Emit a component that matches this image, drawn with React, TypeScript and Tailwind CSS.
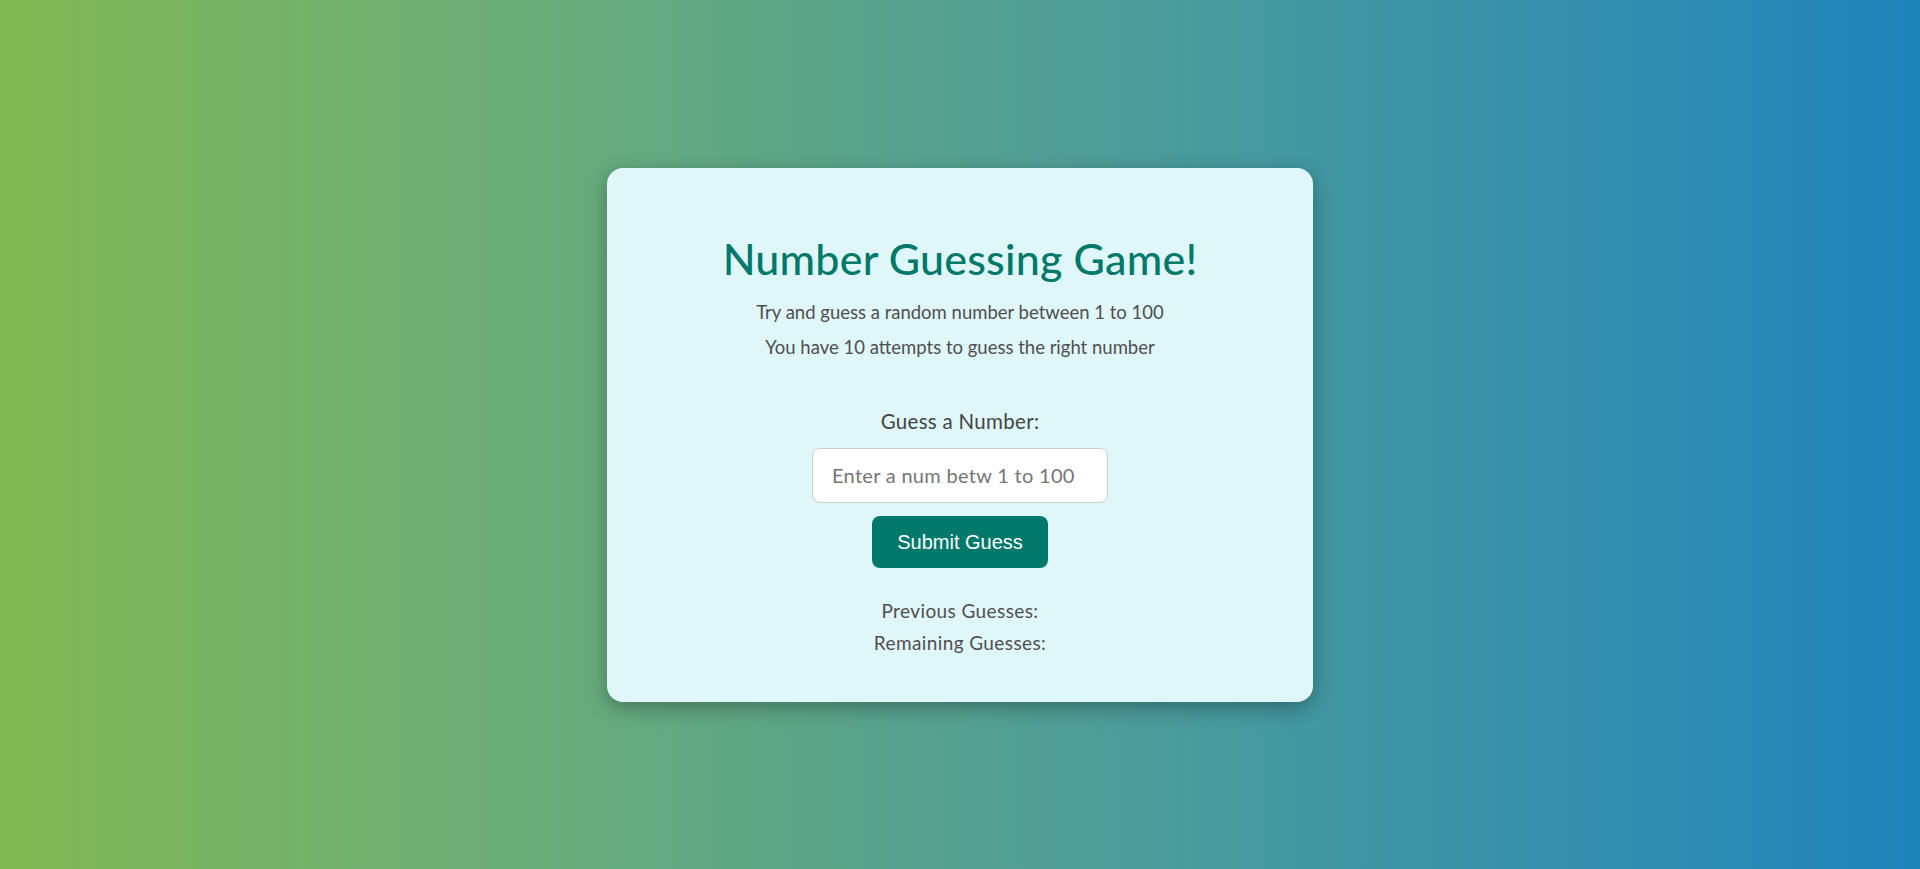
import React from "react";

export default function App() {
  return (
    <div className="min-h-screen w-full flex items-center justify-center bg-gradient-to-r from-[#83b951] to-[#1f84bb] font-['Lato',sans-serif]">
      <div className="w-[706px] bg-[#e0f7fa] rounded-[16px] shadow-[0_6px_20px_rgba(0,0,0,0.3)] pt-[67px] pb-[43px] flex flex-col items-center">
        <h1 className="text-[43px] leading-[48px] text-[#00796b] font-medium tracking-[0.2px]">Number Guessing Game!</h1>
        <p className="mt-[12px] text-[18.5px] leading-[35px] text-[#4f4f4f]">Try and guess a random number between 1 to 100</p>
        <p className="text-[18.5px] leading-[35px] text-[#4f4f4f]">You have 10 attempts to guess the right number</p>
        <label className="mt-[42px] text-[20.5px] leading-[28px] text-[#444] tracking-[0.3px]">Guess a Number:</label>
        <input
          type="text"
          placeholder="Enter a num betw 1 to 100"
          className="mt-[13px] w-[296px] h-[55px] rounded-[8px] border border-[#cccccc] bg-white px-[19px] text-[20px] tracking-[0.3px] font-['Lato',sans-serif] placeholder:text-[#767676] outline-none"
        />
        <button className="mt-[13px] w-[176px] h-[52px] rounded-[8px] bg-[#00796b] text-white text-[20px] font-['Liberation_Sans',Arial,sans-serif]">
          Submit Guess
        </button>
        <div className="mt-[27px] text-[19px] leading-[32px] text-[#4f4f4f] tracking-[0.4px]">Previous Guesses:</div>
        <div className="text-[19px] leading-[32px] text-[#4f4f4f] tracking-[0.4px]">Remaining Guesses:</div>
      </div>
    </div>
  );
}
